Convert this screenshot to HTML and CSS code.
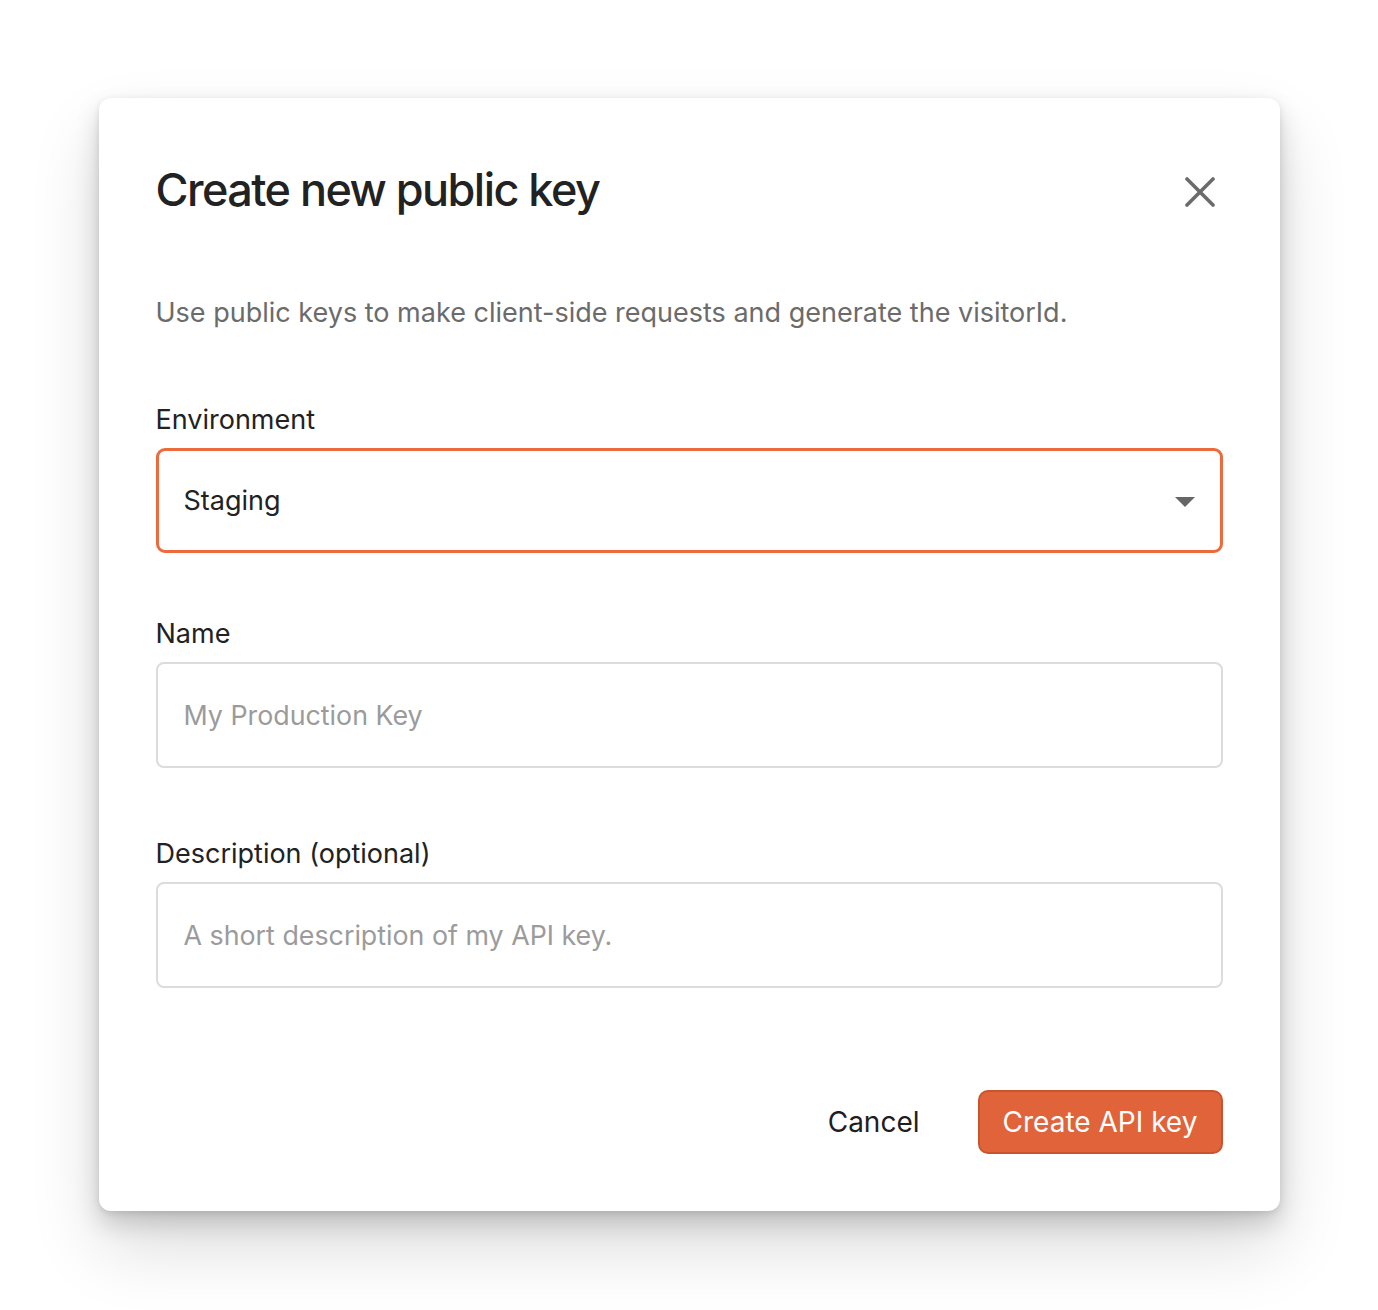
FILE: index.html
```html
<!DOCTYPE html>
<html lang="en">
<head>
<meta charset="utf-8">
<title>Create new public key</title>
<link rel="stylesheet" href="styles.css">
</head>
<body>
<div class="page">
  <div class="dialog" role="dialog" aria-labelledby="dlg-title">
    <div class="header">
      <h1 id="dlg-title" class="title">Create new public key</h1>
      <button class="close" aria-label="Close">
        <svg width="30" height="30" viewBox="0 0 30 30" aria-hidden="true">
          <path d="M2 2 L28 28 M28 2 L2 28" stroke="#6b6b6b" stroke-width="3.6" stroke-linecap="round" fill="none"/>
        </svg>
      </button>
    </div>
    <p class="desc">Use public keys to make client-side requests and generate the visitorId.</p>

    <div class="field field-env">
      <label class="label">Environment</label>
      <div class="select">
        <span class="select-value">Staging</span>
        <svg class="caret" width="20" height="10" viewBox="0 0 20 10" aria-hidden="true">
          <path d="M0 0 H20 L10 10 Z" fill="#666"/>
        </svg>
      </div>
    </div>

    <div class="field field-name">
      <label class="label">Name</label>
      <div class="input"><span class="placeholder">My Production Key</span></div>
    </div>

    <div class="field field-desc">
      <label class="label">Description (optional)</label>
      <div class="input"><span class="placeholder">A short description of my API key.</span></div>
    </div>

    <div class="actions">
      <button class="btn-cancel">Cancel</button>
      <button class="btn-primary">Create API key</button>
    </div>
  </div>
</div>
</body>
</html>
```

FILE: styles.css
```css
* { box-sizing: border-box; }

html, body {
  margin: 0;
  padding: 0;
  background: #ffffff;
}

body {
  font-family: Inter, "Noto Sans", "Liberation Sans", sans-serif;
  color: #222;
  min-height: 1310px;
}

.page {
  display: flex;
  justify-content: center;
  padding-top: 98px;
  padding-bottom: 99px;
}

.dialog {
  width: 1181px;
  height: 1113px;
  background: #fff;
  border-radius: 12px;
  padding: 0 57px 0 57px;
  display: flex;
  flex-direction: column;
  box-shadow:
    0 2px 6px rgba(0, 0, 0, 0.10),
    0 12px 24px rgba(0, 0, 0, 0.16),
    0 36px 70px rgba(0, 0, 0, 0.14);
}

.header {
  display: flex;
  align-items: center;
  justify-content: space-between;
  padding-top: 64px;
}

.title {
  margin: 0;
  font-size: 45px;
  line-height: 56px;
  font-weight: 500;
  letter-spacing: -1.55px;
  color: #222;
}

.close {
  border: 0;
  background: transparent;
  padding: 0;
  width: 30px;
  height: 30px;
  margin-right: 8px;
  margin-top: 4px;
  display: flex;
  cursor: pointer;
}

.desc {
  margin: 77px 0 0 0;
  font-size: 27px;
  line-height: 36px;
  color: #6b6b6b;
  letter-spacing: 0;
}

.field {
  display: flex;
  flex-direction: column;
}

.field-env { margin-top: 71px; }
.field-name { margin-top: 63px; }
.field-desc { margin-top: 68px; }

.label {
  font-size: 27px;
  line-height: 36px;
  color: #222;
  margin-bottom: 10px;
}

.select {
  height: 105px;
  border: 3px solid #ec6a3b;
  border-radius: 9px;
  display: flex;
  align-items: center;
  justify-content: space-between;
  padding: 0 25px 0 25px;
}

.select-value {
  font-size: 27px;
  color: #222;
}

.caret { margin-top: 2px; }

.input {
  height: 106px;
  border: 2px solid #dcdcdc;
  border-radius: 8px;
  display: flex;
  align-items: center;
  padding: 0 26px;
}

.placeholder {
  font-size: 26.8px;
  color: #9b9b9b;
}

.actions {
  margin-top: 102px;
  display: flex;
  justify-content: flex-end;
  align-items: center;
}

.btn-cancel {
  border: 0;
  background: transparent;
  font-family: inherit;
  font-size: 28px;
  color: #1e1e1e;
  padding: 0;
  margin-right: 58px;
  cursor: pointer;
}

.btn-primary {
  width: 245px;
  height: 64px;
  border: 2px solid #c9552e;
  background: #e1633a;
  color: #fff;
  font-family: inherit;
  font-size: 28px;
  border-radius: 10px;
  cursor: pointer;
  padding: 0;
}
```
